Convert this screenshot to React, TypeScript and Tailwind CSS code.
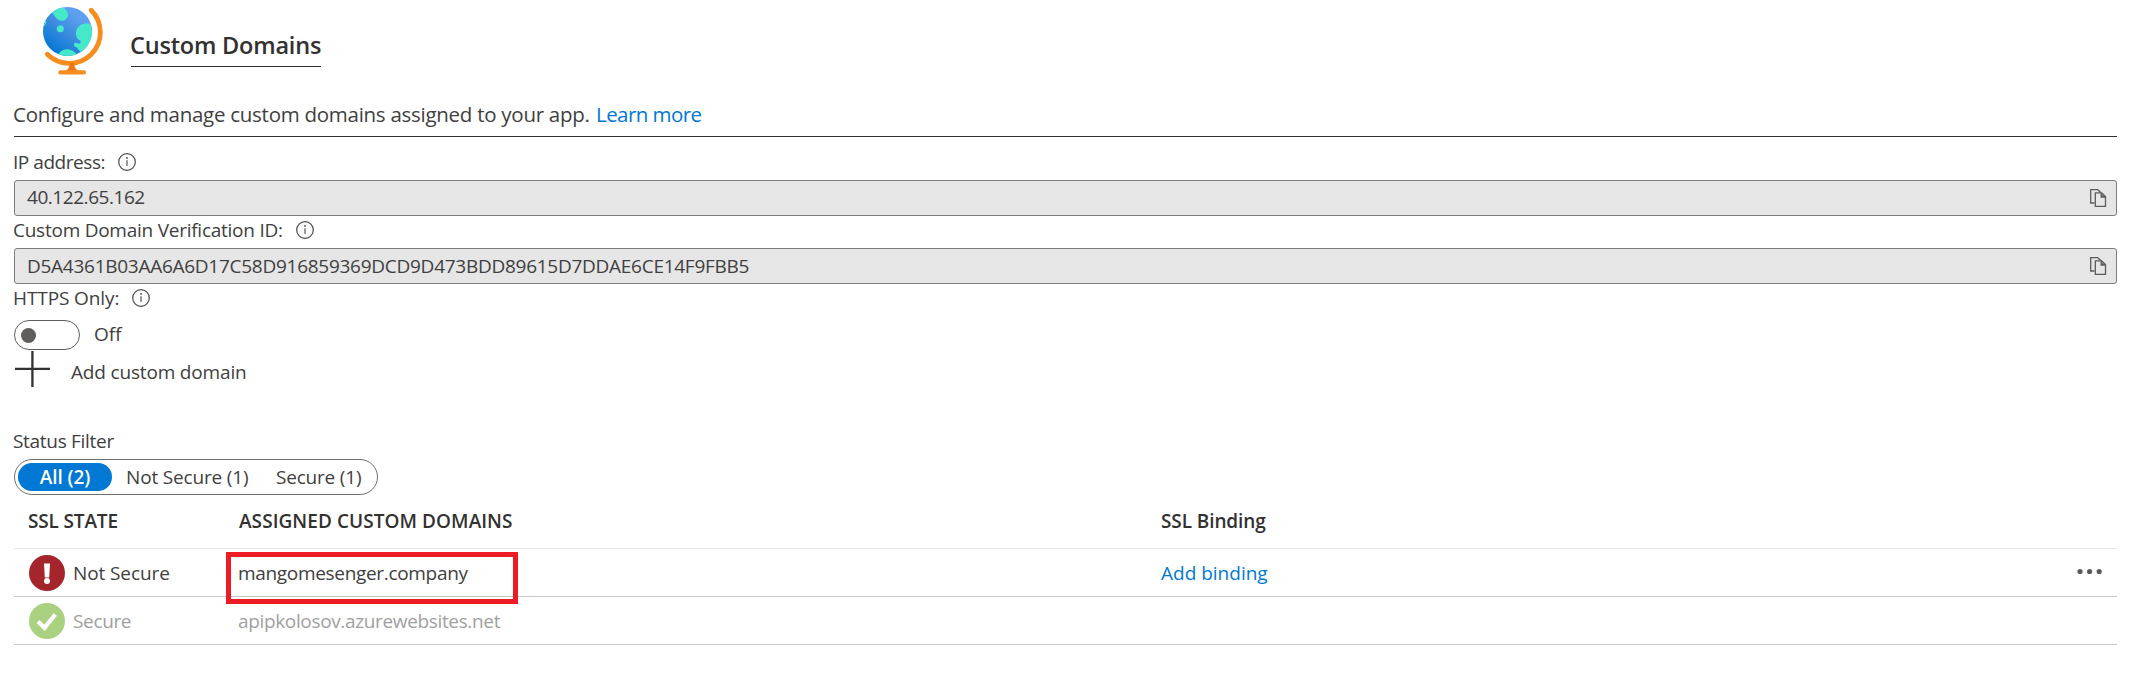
import type { ReactNode } from "react";

function GlobeIcon() {
  return (
    <svg className="h-[72px] w-[62px]" viewBox="0 0 62 72" fill="none">
      <defs>
        <linearGradient id="sea" x1="10" y1="46" x2="42" y2="6" gradientUnits="userSpaceOnUse">
          <stop offset="0" stopColor="#0078d4" />
          <stop offset="0.45" stopColor="#3a8adf" />
          <stop offset="0.85" stopColor="#5ea0ef" />
        </linearGradient>
        <clipPath id="sphere">
          <circle cx="26.5" cy="26.4" r="24.5" />
        </clipPath>
      </defs>
      <circle cx="26.5" cy="26.4" r="24.5" fill="url(#sea)" />
      <g clipPath="url(#sphere)" fill="#45e9ca">
        <path d="M10 6.5C13 9.500 14.500 13 17 14.500A5.800 5.800 0 0 0 24.500 4.500L20 0Z" />
        <circle cx="19.300" cy="23.800" r="3.500" />
        <path d="M0 13.500Q6.200 14.500 5.200 18Q4.600 21 1 22Z" />
        <path d="M52 19.500C46 17 36 18.500 35 27C34.600 32 36 34 39.500 36Q40.500 38.500 38 38.800Q35 37 33.400 38.300Q32 40.500 34.500 41.900Q37 42.200 37.200 44.500L41 48L54 34Z" />
        <path d="M16 51Q20 43.500 27 44.200Q33 44.800 37 51L27 54Z" />
      </g>
      <path
        d="M50.200 5.200A31 31 0 0 1 6.300 49.300"
        stroke="#f78d1e"
        strokeWidth="4.800"
        strokeLinecap="round"
      />
      <path d="M28.700 58H33.300V60.500Q34 64 37.500 66H24.500Q28 64 28.700 60.500Z" fill="#f1740a" />
      <rect x="17.300" y="65.200" width="27.700" height="4.300" rx="2" fill="#f78d1e" />
    </svg>
  );
}

function InfoIcon() {
  return (
    <svg className="h-[18px] w-[18px]" viewBox="0 0 18 18" fill="none">
      <circle cx="9" cy="9" r="8.300" stroke="#4a4a4a" strokeWidth="1.200" />
      <path d="M9 7.300V13" stroke="#555" strokeWidth="1.200" />
      <circle cx="9" cy="5" r="0.900" fill="#555" />
    </svg>
  );
}

function CopyIcon() {
  return (
    <svg className="h-[20px] w-[18px]" viewBox="0 0 18 20" fill="none" stroke="#5c5c5c" strokeWidth="1.300">
      <path d="M5.500 15H1.700V1.700H8.700L12 4.800" />
      <path d="M6.300 4.800H12.700L16.500 8.600V18.300H6.300Z" fill="#e6e6e6" />
      <path d="M12.200 4.800V9H16.500" fill="#777" />
    </svg>
  );
}

function Label({ children, text }: { children?: ReactNode; text: ReactNode }) {
  return (
    <div className="-ml-px flex items-center gap-[13px]">
      {text}
      {children}
    </div>
  );
}

function ReadOnlyField({ children }: { children: ReactNode }) {
  return (
    <div className="flex h-9 items-center justify-between rounded-[3px] border border-[#7d7d7d] bg-[#e6e6e6] pr-[9px] pl-3">
      {children}
      <CopyIcon />
    </div>
  );
}

export default function App() {
  return (
    <div className="flex h-[681px] w-full flex-col bg-white pr-[13px] pl-[14px] font-['Open_Sans','Noto_Sans',sans-serif] text-[19px] leading-6 whitespace-nowrap text-[#404040]">
      <header className="flex h-[92px] items-start gap-[28px] pt-[5px] pl-[27px]">
        <GlobeIcon />
        <h1 className="mt-[25px] h-[37px] w-[190px] border-b border-[#323130] -indent-px text-[23.5px] leading-[31px] font-semibold tracking-[-0.2px] text-[#323130]">
          Custom Domains
        </h1>
      </header>

      <p className="flex h-[45px] items-center border-b border-[#323130] text-[20.5px]">
        <span className="-ml-px w-[583px] tracking-[-0.27px]">
          Configure and manage custom domains assigned to your app.
        </span>
        <a className="tracking-[-0.55px] text-[#0078d4]">Learn more</a>
      </p>

      <div className="flex h-[43px] items-center pt-[6px]">
        <Label text={<span className="tracking-[-0.45px]">IP address:</span>}>
          <InfoIcon />
        </Label>
      </div>
      <ReadOnlyField>
        <span className="pb-[3px] tracking-[-0.45px]">40.122.65.162</span>
      </ReadOnlyField>

      <div className="flex h-8 items-center pb-[5px]">
        <Label text={<span className="tracking-[-0.25px]">Custom Domain Verification ID:</span>}>
          <InfoIcon />
        </Label>
      </div>
      <ReadOnlyField>
        <span className="pb-px tracking-[-0.27px]">
          D5A4361B03AA6A6D17C58D916859369DCD9D473BDD89615D7DDAE6CE14F9FBB5
        </span>
      </ReadOnlyField>

      <div className="flex h-9 items-center pb-[9px]">
        <Label text={<span className="tracking-[-0.1px]">HTTPS Only:</span>}>
          <InfoIcon />
        </Label>
      </div>
      <div className="flex h-[30px] items-center gap-[14px]">
        <button className="flex h-[30px] w-[66px] items-center rounded-full border border-[#605e5c] pl-[6px]">
          <span className="size-[15px] rounded-full bg-[#605e5c]" />
        </button>
        <span className="pb-[3px]">Off</span>
      </div>

      <div className="flex h-[72px] items-start gap-[21px]">
        <svg className="h-[38px] w-9" viewBox="0 0 36 38" stroke="#323130" strokeWidth="2.300">
          <path d="M1 18.800H36M18.400 1V37" />
        </svg>
        <span className="pt-[10px] tracking-[-0.17px]">Add custom domain</span>
      </div>

      <div className="-ml-px flex h-[37px] items-center tracking-[-0.3px]">Status Filter</div>
      <div className="flex h-9 w-[364px] items-center rounded-full border border-[#6f6f6f] pl-[3px]">
        <span className="flex h-7 w-[94px] items-center justify-center rounded-full bg-[#0078d4] pb-px font-semibold tracking-[-0.1px] text-white">
          All (2)
        </span>
        <span className="w-[164px] pb-px pl-[14px] tracking-[-0.17px]">Not Secure (1)</span>
        <span className="pb-px tracking-[-0.2px]">Secure (1)</span>
      </div>

      <div className="grid h-[54px] grid-cols-[225px_922px_1fr] items-center border-b border-[#e8e8e8] pb-px font-semibold text-[#323130]">
        <span className="pl-[14px] tracking-[-0.15px]">SSL STATE</span>
        <span className="tracking-[0.06px]">ASSIGNED CUSTOM DOMAINS</span>
        <span className="tracking-[-0.1px]">SSL Binding</span>
      </div>

      <div className="grid h-12 grid-cols-[225px_922px_1fr_40px] items-center border-b border-[#c8c8c8]">
        <div className="flex items-center gap-2 pl-[15px]">
          <svg className="size-9" viewBox="0 0 36 36">
            <circle cx="18" cy="18" r="18" fill="#a4262c" />
            <path d="M15 8.500H21L20.200 22.500H15.800Z" fill="#fff" />
            <circle cx="18" cy="26" r="3" fill="#fff" />
          </svg>
          <span className="tracking-[-0.1px]">Not Secure</span>
        </div>
        <div className="relative flex items-center">
          <span className="-ml-px tracking-[-0.32px]">mangomesenger.company</span>
          <span className="absolute top-[-9px] left-[-13px] h-[52px] w-[292px] border-5 border-[#ed1c24]" />
        </div>
        <a className="text-[#0078d4]">Add binding</a>
        <svg className="h-6 w-[26px]" viewBox="0 0 26 24" fill="#5a5a5a">
          <circle cx="3" cy="10.500" r="2.600" />
          <circle cx="12.600" cy="10.500" r="2.600" />
          <circle cx="22.200" cy="10.500" r="2.600" />
        </svg>
      </div>

      <div className="grid h-12 grid-cols-[225px_922px_1fr] items-center border-b border-[#c8c8c8] text-[#a0a0a0]">
        <div className="flex items-center gap-2 pl-[15px]">
          <svg className="size-9" viewBox="0 0 36 36" fill="none">
            <circle cx="18" cy="18" r="18" fill="#aad180" />
            <path d="M9 18.500L15.500 24.800L26.300 11.500" stroke="#fff" strokeWidth="4.200" />
          </svg>
          <span className="tracking-[-0.35px]">Secure</span>
        </div>
        <span className="-ml-px tracking-[-0.35px]">apipkolosov.azurewebsites.net</span>
      </div>
    </div>
  );
}
